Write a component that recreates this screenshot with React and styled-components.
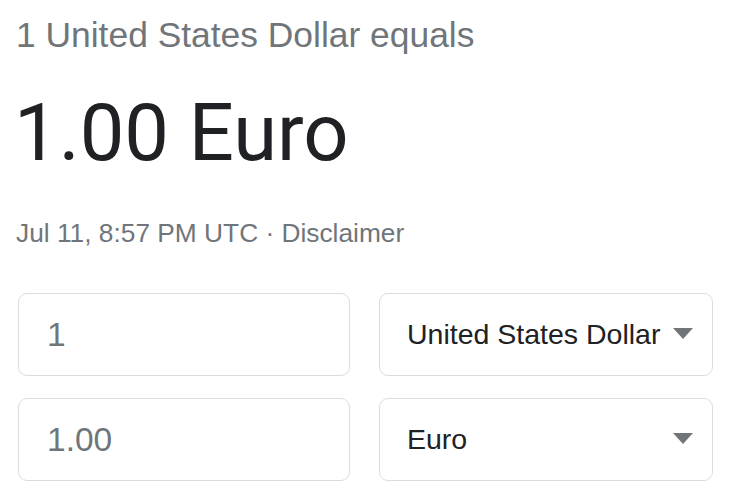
import React from "react";
import styled, { createGlobalStyle } from "styled-components";

const Global = createGlobalStyle`
  html, body { margin: 0; padding: 0; background: #fff; }
  body { font-family: "Liberation Sans", Arial, sans-serif; }
`;

const Card = styled.div`
  padding: 15px 22px 0 16px;
  width: 734px;
  box-sizing: border-box;
`;

const Lead = styled.div`
  font-size: 35.4px;
  line-height: 40px;
  color: #70757a;
`;

const Result = styled.div`
  margin-top: 31px;
  margin-left: -2px;
  font-family: Roboto, "Open Sans", sans-serif;
  font-size: 79.5px;
  line-height: 93px;
  color: #202124;
`;

const Meta = styled.div`
  margin-top: 39px;
  font-size: 26.3px;
  line-height: 30px;
  color: #70757a;
`;

const Grid = styled.div`
  margin-top: 45px;
  margin-left: 2px;
  display: grid;
  grid-template-columns: 332px 334px;
  grid-auto-rows: 83px;
  column-gap: 29px;
  row-gap: 22px;
`;

const Amount = styled.input`
  box-sizing: border-box;
  width: 100%;
  height: 100%;
  border: 1px solid #dadce0;
  border-radius: 9px;
  padding: 0 28px;
  font-family: "Liberation Sans", Arial, sans-serif;
  font-size: 33.5px;
  color: #70757a;
  background: #fff;
  outline: none;
`;

const Picker = styled.div`
  box-sizing: border-box;
  height: 100%;
  border: 1px solid #dadce0;
  border-radius: 9px;
  padding: 0 19px 0 27px;
  display: flex;
  align-items: center;
  justify-content: space-between;
  font-size: 28.5px;
  color: #202124;
`;

const Caret = styled.span`
  width: 0;
  height: 0;
  border-left: 10px solid transparent;
  border-right: 10px solid transparent;
  border-top: 11px solid #70757a;
  margin-top: -2px;
`;

export default function App() {
  return (
    <>
      <Global />
      <Card>
        <Lead>1 United States Dollar equals</Lead>
        <Result>1.00 Euro</Result>
        <Meta>Jul 11, 8:57 PM UTC · Disclaimer</Meta>
        <Grid>
          <Amount readOnly defaultValue="1" />
          <Picker>
            <span>United States Dollar</span>
            <Caret />
          </Picker>
          <Amount readOnly defaultValue="1.00" />
          <Picker>
            <span>Euro</span>
            <Caret />
          </Picker>
        </Grid>
      </Card>
    </>
  );
}
